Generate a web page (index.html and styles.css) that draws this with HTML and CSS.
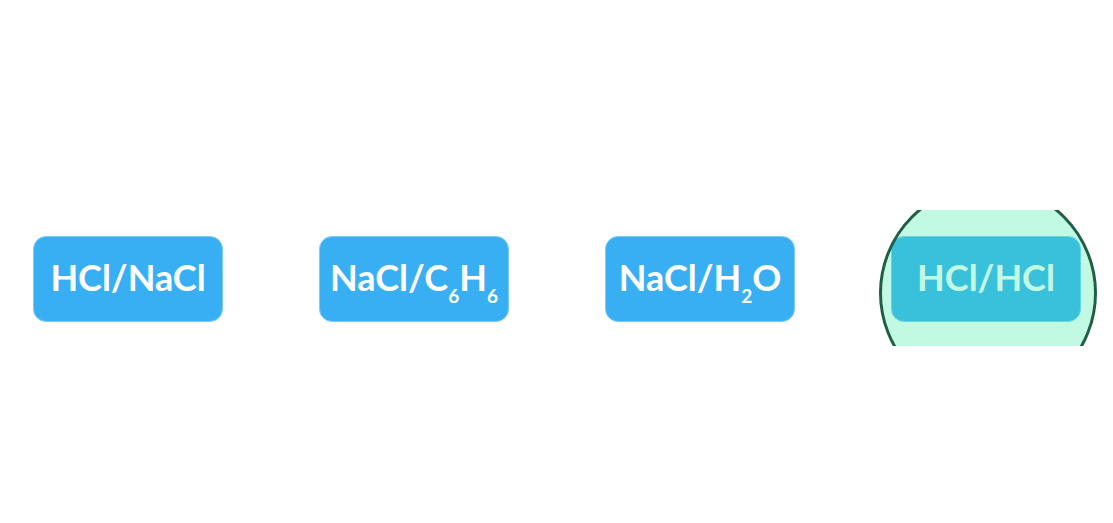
FILE: index.html
```html
<!DOCTYPE html>
<html lang="en">

<head>
    <meta charset="UTF-8">
    <meta name="viewport" content="width=device-width, initial-scale=1.0">
    <title>Molecule pairs</title>
    <link rel="stylesheet" href="styles.css">
</head>

<body>

    <main class="choices">
        <div class="choice">
            <button type="button" class="choice-btn">HCl/NaCl</button>
        </div>
        <div class="choice">
            <button type="button" class="choice-btn">NaCl/C<sub>6</sub>H<sub>6</sub></button>
        </div>
        <div class="choice">
            <button type="button" class="choice-btn">NaCl/H<sub>2</sub>O</button>
        </div>
        <div class="choice selected">
            <button type="button" class="choice-btn" aria-pressed="true">HCl/HCl</button>
            <div class="marker"></div>
        </div>
    </main>

</body>

</html>
```
FILE: styles.css
```css
body {
    margin: 0;
    background-color: #ffffff;
    font-family: Lato, "Open Sans", sans-serif;
}

.choices {
    display: grid;
    grid-template-columns: repeat(4, 1fr);
    gap: 96px;
    padding: 210px 32px 0 33px;
}

.choice {
    position: relative;
    padding: 26px 0 24px;
}

.choice-btn {
    width: 100%;
    height: 86px;
    padding: 0 0 4px;
    border: 1px solid #7fcbf7;
    border-radius: 13px;
    background-color: #39aff3;
    color: #ffffff;
    font-family: inherit;
    font-size: 36px;
    font-weight: bold;
    line-height: 40px;
    white-space: nowrap;
    display: block;
    cursor: pointer;
}

.choice-btn sub {
    position: relative;
    top: 12px;
    font-size: 19px;
    line-height: 0;
    vertical-align: baseline;
}

/* the marker circle is cut off by the top and bottom of the row */
.marker {
    position: absolute;
    inset: 0 -16px;
    overflow: hidden;
    pointer-events: none;
}

.marker::before {
    content: "";
    position: absolute;
    box-sizing: border-box;
    top: -26px;
    left: 4px;
    right: 0;
    aspect-ratio: 1;
    border: 3px solid #1d6045;
    border-radius: 50%;
    background-color: rgba(58, 236, 164, 0.31);
    background-clip: padding-box;
}
```
